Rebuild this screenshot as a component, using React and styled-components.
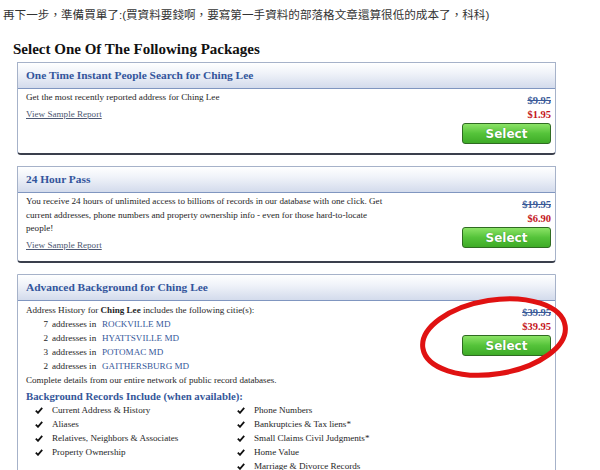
import React from 'react';
import styled, { createGlobalStyle } from 'styled-components';

const GlobalStyle = createGlobalStyle`
  html, body {
    margin: 0;
    padding: 0;
    background: #fff;
  }
  body {
    font-family: "Liberation Serif", "Times New Roman", serif;
    color: #222;
  }
`;

const packages = [
  {
    title: 'One Time Instant People Search for Ching Lee',
    text: ['Get the most recently reported address for Ching Lee'],
    oldPrice: '$9.95',
    price: '$1.95',
  },
  {
    title: '24 Hour Pass',
    text: [
      'You receive 24 hours of unlimited access to billions of records in our database with one click. Get',
      'current addresses, phone numbers and property ownership info - even for those hard-to-locate',
      'people!',
    ],
    oldPrice: '$19.95',
    price: '$6.90',
  },
];

const cities = [
  { count: 7, name: 'ROCKVILLE MD' },
  { count: 2, name: 'HYATTSVILLE MD' },
  { count: 3, name: 'POTOMAC MD' },
  { count: 2, name: 'GAITHERSBURG MD' },
];

const recordsLeft = [
  'Current Address & History',
  'Aliases',
  'Relatives, Neighbors & Associates',
  'Property Ownership',
];

const recordsRight = [
  'Phone Numbers',
  'Bankruptcies & Tax liens*',
  'Small Claims Civil Judgments*',
  'Home Value',
  'Marriage & Divorce Records',
];

const Check = () => (
  <svg width="8" height="7" viewBox="0 0 8 7">
    <path d="M0.8 3.6 L3 5.8 L7.2 0.9" fill="none" stroke="#111" strokeWidth="1.8" />
  </svg>
);

const PriceBlock = ({ oldPrice, price }) => (
  <PriceCol>
    <OldPrice>{oldPrice}</OldPrice>
    <NewPrice>{price}</NewPrice>
    <SelectButton>Select</SelectButton>
  </PriceCol>
);

const App = () => (
  <Page>
    <GlobalStyle />
    <Intro>再下一步，準備買單了:(買資料要錢啊，要寫第一手資料的部落格文章還算很低的成本了，科科)</Intro>
    <Heading>Select One Of The Following Packages</Heading>
    <Cards>
      {packages.map((p) => (
        <Card key={p.title}>
          <CardHeader>{p.title}</CardHeader>
          <CardBody>
            <Details>
              {p.text.map((line) => (
                <Line key={line}>{line}</Line>
              ))}
              <SampleLink href="#">View Sample Report</SampleLink>
            </Details>
            <PriceBlock oldPrice={p.oldPrice} price={p.price} />
          </CardBody>
        </Card>
      ))}
      <Card $open>
        <CardHeader>Advanced Background for Ching Lee</CardHeader>
        <CardBody>
          <Details $lh="14px">
            <Line>
              Address History for <b>Ching Lee</b> includes the following citie(s):
            </Line>
            <CityList>
              {cities.map((c) => (
                <React.Fragment key={c.name}>
                  <CityCount>{c.count}</CityCount>
                  <Line>addresses in</Line>
                  <CityName>{c.name}</CityName>
                </React.Fragment>
              ))}
            </CityList>
            <Line>Complete details from our entire network of public record databases.</Line>
            <SubHeading>Background Records Include (when available):</SubHeading>
            <Records>
              <RecordCol>
                {recordsLeft.map((r) => (
                  <RecordItem key={r}>
                    <Check />
                    <span>{r}</span>
                  </RecordItem>
                ))}
              </RecordCol>
              <RecordCol>
                {recordsRight.map((r) => (
                  <RecordItem key={r}>
                    <Check />
                    <span>{r}</span>
                  </RecordItem>
                ))}
              </RecordCol>
            </Records>
          </Details>
          <PriceBlock oldPrice="$39.95" price="$39.95" />
        </CardBody>
        <Annotation width="170" height="100" viewBox="0 0 170 100">
          <ellipse
            cx="83"
            cy="48"
            rx="72"
            ry="37"
            transform="rotate(-9 83 48)"
            fill="none"
            stroke="#e01212"
            strokeWidth="5"
          />
        </Annotation>
      </Card>
    </Cards>
  </Page>
);

export default App;

// Styled components
const Page = styled.div`
  width: 600px;
  height: 470px;
  overflow: hidden;
`;

const Intro = styled.div`
  padding: 8px 0 0 3px;
  font-family: "Liberation Sans", "Noto Sans CJK TC", sans-serif;
  font-size: 11.6px;
  line-height: 14px;
  color: #333;
  white-space: nowrap;
`;

const Heading = styled.h2`
  margin: 19px 0 4px 13px;
  font-size: 15px;
  line-height: 17px;
  font-weight: bold;
  color: #111;
`;

const Cards = styled.div`
  display: flex;
  flex-direction: column;
  gap: 11px;
  padding-left: 17px;
  width: 539px;
`;

const Card = styled.div`
  position: relative;
  border: 1px solid #a6b2c9;
  border-bottom: ${(p) => (p.$open ? '1px solid #a6b2c9' : '2px solid #3a3f4c')};
  border-radius: 0 0 4px 4px;
  background: #fff;
`;

const CardHeader = styled.div`
  height: 25px;
  line-height: 25px;
  padding-left: 8px;
  border-bottom: 1px solid #8096c0;
  background: linear-gradient(#ffffff, #f0f3f9 40%, #d3dbec);
  font-size: 11.4px;
  font-weight: bold;
  color: #33559c;
`;

const CardBody = styled.div`
  display: flex;
  justify-content: space-between;
  padding: 2px 4px 9px 8px;
`;

const Details = styled.div`
  display: flex;
  flex-direction: column;
  font-size: 9.1px;
  line-height: ${(p) => p.$lh || '13.5px'};
  color: #1e1e1e;
`;

const Line = styled.span`
  white-space: nowrap;
`;

const SampleLink = styled.a`
  margin-top: 3px;
  color: #4d5872;
  text-decoration: underline;
  align-self: flex-start;
`;

const PriceCol = styled.div`
  display: flex;
  flex-direction: column;
  align-items: flex-end;
  padding-top: 3px;
  font-size: 10.5px;
  line-height: 14px;
  font-weight: bold;
`;

const OldPrice = styled.span`
  color: #3b5a98;
  text-decoration: line-through;
`;

const NewPrice = styled.span`
  color: #c4161c;
`;

const SelectButton = styled.button`
  margin-top: 1px;
  width: 89px;
  height: 21px;
  padding: 0;
  border: 1px solid #2f6b22;
  border-radius: 3px;
  background: linear-gradient(#8be366, #55c33a 50%, #3eab27);
  color: #fff;
  font-family: "DejaVu Sans", Verdana, sans-serif;
  font-size: 12px;
  font-weight: bold;
  text-shadow: 0 0 1px rgba(0, 60, 0, 0.5);
`;

const CityList = styled.div`
  display: grid;
  grid-template-columns: 26px 50px auto;
`;

const CityCount = styled.span`
  text-align: right;
  padding-right: 4px;
`;

const CityName = styled.span`
  color: #35579a;
  white-space: nowrap;
`;

const SubHeading = styled.div`
  margin-top: 2px;
  font-size: 10.8px;
  line-height: 14px;
  font-weight: bold;
  color: #35579a;
`;

const Records = styled.div`
  display: grid;
  grid-template-columns: 202px auto;
  padding-left: 9px;
`;

const RecordCol = styled.div`
  display: flex;
  flex-direction: column;
`;

const RecordItem = styled.div`
  display: flex;
  align-items: center;
  gap: 9px;
  white-space: nowrap;
`;

const Annotation = styled.svg`
  position: absolute;
  left: 393px;
  top: 14px;
  pointer-events: none;
`;
